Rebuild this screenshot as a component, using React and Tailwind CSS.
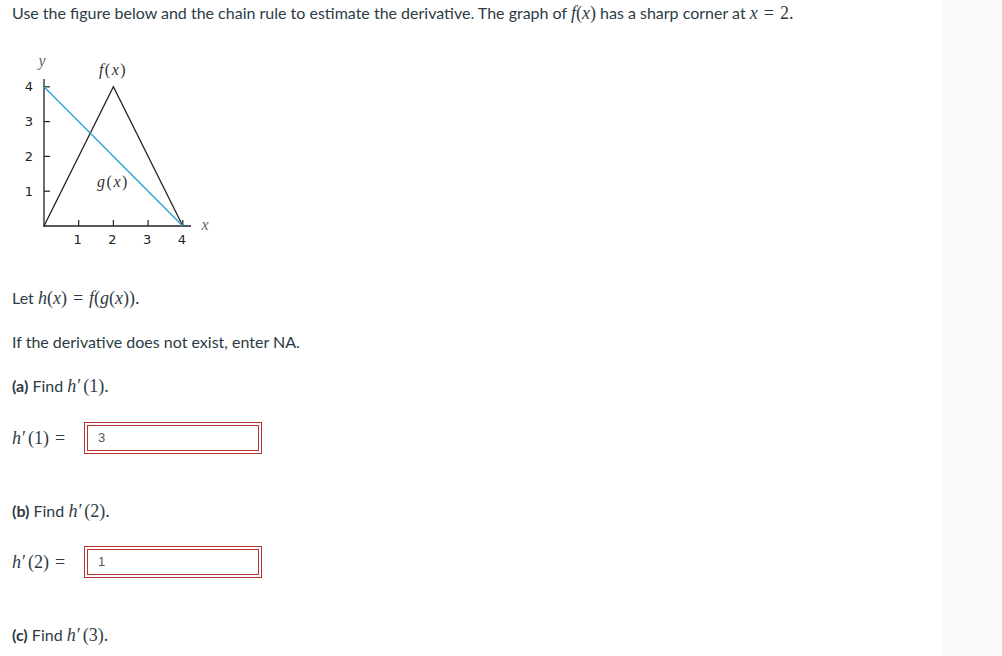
import React from "react";

const serif = { fontFamily: '"Liberation Serif", "Times New Roman", serif' };

function M({ children }) {
  return (
    <span className="text-[18px] leading-none" style={serif}>
      {children}
    </span>
  );
}

function I({ children }) {
  return <span className="italic">{children}</span>;
}

function Eq() {
  return <span className="mx-[6px]">=</span>;
}

function Prime() {
  return <span className="ml-[1px] mr-[2px]">′</span>;
}

function Graph() {
  const px = (x) => 44 + 34.7 * x;
  const py = (y) => 226 - 34.8 * y;
  return (
    <svg width="220" height="210" viewBox="12 40 220 210" className="block mt-[17px]">
      <line x1="44" y1="79" x2="44" y2="226.5" stroke="#222" strokeWidth="1.3" />
      <line x1="43.5" y1="226" x2="191" y2="226" stroke="#222" strokeWidth="1.3" />
      {[1, 2, 3, 4].map((v) => (
        <line key={"yt" + v} x1="44" y1={py(v)} x2="50" y2={py(v)} stroke="#222" strokeWidth="1.2" />
      ))}
      {[1, 2, 3, 4].map((v) => (
        <line key={"xt" + v} x1={px(v)} y1="226" x2={px(v)} y2="220" stroke="#222" strokeWidth="1.2" />
      ))}
      {[1, 2, 3, 4].map((v) => (
        <text
          key={"yl" + v}
          x="29"
          y={py(v) + 4.5}
          textAnchor="middle"
          fontSize="13"
          fill="#222"
          fontFamily='"DejaVu Sans", sans-serif'
        >
          {v}
        </text>
      ))}
      {[1, 2, 3, 4].map((v) => (
        <text
          key={"xl" + v}
          x={px(v) - 1}
          y="243.5"
          textAnchor="middle"
          fontSize="13"
          fill="#222"
          fontFamily='"DejaVu Sans", sans-serif'
        >
          {v}
        </text>
      ))}
      <polyline
        points={`${px(0)},${py(0)} ${px(2)},${py(4)} ${px(4)},${py(0)}`}
        fill="none"
        stroke="#222"
        strokeWidth="1.3"
      />
      <line x1={px(0)} y1={py(4)} x2={px(4)} y2={py(0)} stroke="#27a4d6" strokeWidth="1.4" />
      <text x="42" y="66" textAnchor="middle" fontSize="16" fill="#666" fontStyle="italic" fontFamily='"Liberation Serif", serif'>y</text>
      <text x="205" y="230" textAnchor="middle" fontSize="16" fill="#666" fontStyle="italic" fontFamily='"Liberation Serif", serif'>x</text>
      <text x="113" y="75" textAnchor="middle" fontSize="16" fill="#333" fontFamily='"Liberation Serif", serif' letterSpacing="1.5">
        <tspan fontStyle="italic">f</tspan>(<tspan fontStyle="italic">x</tspan>)
      </text>
      <text x="113" y="187" textAnchor="middle" fontSize="16" fill="#333" fontFamily='"Liberation Serif", serif' letterSpacing="1.5">
        <tspan fontStyle="italic">g</tspan>(<tspan fontStyle="italic">x</tspan>)
      </text>
    </svg>
  );
}

function AnswerBox({ value }) {
  return (
    <div className="border border-[#b83434] p-[2px] w-[178px] h-[32px] bg-white">
      <div
        className="border border-[#b83434] h-full flex items-center pl-[10px] text-[13px] text-[#555]"
        style={{ fontFamily: '"Liberation Sans", Arial, sans-serif' }}
      >
        {value}
      </div>
    </div>
  );
}

function Line({ className = "", children }) {
  return <div className={"h-[20px] leading-[20px] whitespace-nowrap " + className}>{children}</div>;
}

export default function App() {
  return (
    <div
      className="flex w-[1002px] h-[656px] overflow-hidden bg-white text-[#2d3b45]"
      style={{ fontFamily: 'Lato, "Open Sans", sans-serif' }}
    >
      <div className="w-[942px] pl-[12px] pt-[3px] text-[16px] leading-[20px]">
        <Line>
          Use the figure below and the chain rule to estimate the derivative. The graph of{" "}
          <M>
            <I>f</I>(<I>x</I>)
          </M>{" "}
          has a sharp corner at{" "}
          <M>
            <I>x</I>
            <Eq />2.
          </M>
        </Line>
        <Graph />
        <Line className="mt-[38px]">
          Let{" "}
          <M>
            <I>h</I>(<I>x</I>)<Eq /><I>f</I>(<I>g</I>(<I>x</I>)).
          </M>
        </Line>
        <Line className="mt-[24px]">If the derivative does not exist, enter NA.</Line>
        <Line className="mt-[24px]">
          <span className="font-bold">(a)</span> Find{" "}
          <M>
            <I>h</I>
            <Prime />(1).
          </M>
        </Line>
        <div className="mt-[26px] flex items-center h-[32px]">
          <span className="w-[72px] text-[18px]" style={serif}>
            <I>h</I>
            <Prime />(1)<Eq />
          </span>
          <AnswerBox value="3" />
        </div>
        <Line className="mt-[47px]">
          <span className="font-bold">(b)</span> Find{" "}
          <M>
            <I>h</I>
            <Prime />(2).
          </M>
        </Line>
        <div className="mt-[25px] flex items-center h-[32px]">
          <span className="w-[72px] text-[18px]" style={serif}>
            <I>h</I>
            <Prime />(2)<Eq />
          </span>
          <AnswerBox value="1" />
        </div>
        <Line className="mt-[47px]">
          <span className="font-bold">(c)</span> Find{" "}
          <M>
            <I>h</I>
            <Prime />(3).
          </M>
        </Line>
      </div>
      <div className="flex-1 bg-[#f9f9f9]" />
    </div>
  );
}
